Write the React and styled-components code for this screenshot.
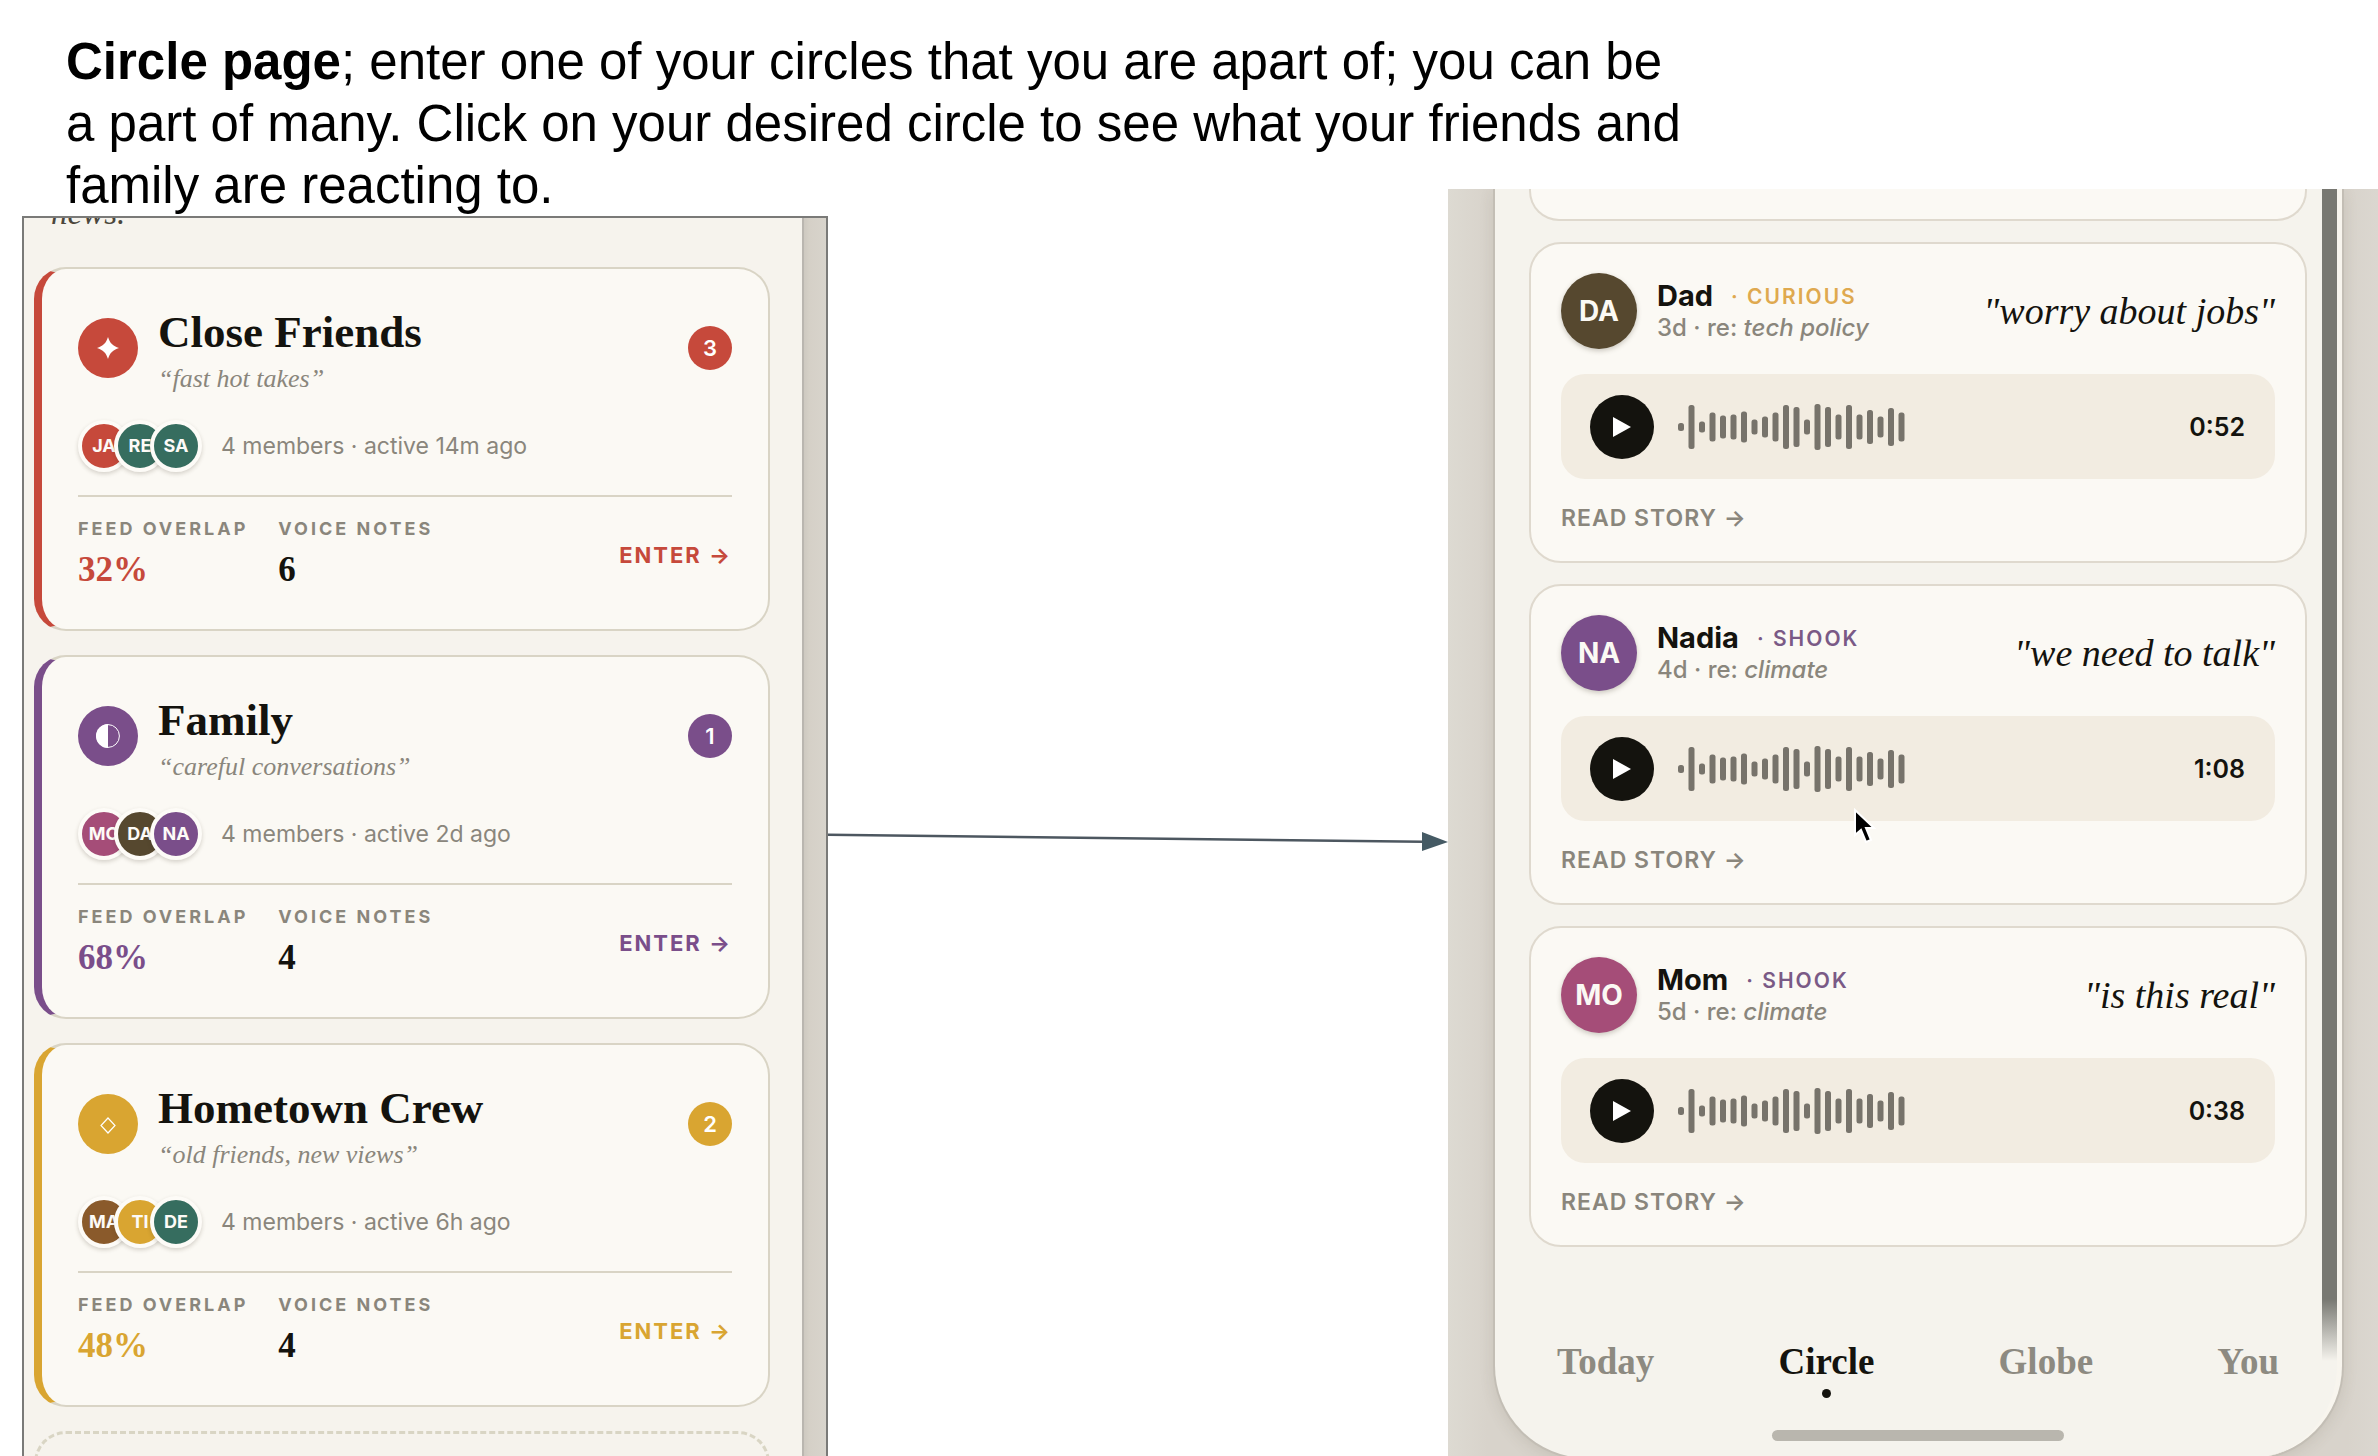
import React from 'react';
import styled, { createGlobalStyle } from 'styled-components';

const serif = `'Liberation Serif', 'Times New Roman', serif`;
const sans = `Inter, 'Liberation Sans', sans-serif`;

const GlobalStyle = createGlobalStyle`
    * {
        box-sizing: border-box;
    }
    body {
        margin: 0;
        background: #fff;
    }
    button {
        border: 0;
        padding: 0;
        background: none;
        cursor: pointer;
    }
    h1, h2, h3, p, dl, dt, dd {
        margin: 0;
    }
`

const Page = styled.div`
    height: 100vh;
    display: flex;
    flex-direction: column;
    overflow: hidden;
    font-family: ${sans};
    color: #14130e;
`
const Intro = styled.p`
    margin-bottom: -28px;
    padding: 31px 0 0 66px;
    font: 51px/62px 'Liberation Sans', Arial, sans-serif;
    color: #000;
`
const Board = styled.main`
    flex: 1;
    min-height: 0;
    padding-left: 22px;
    display: grid;
    grid-template-columns: 806fr 620fr 930fr;
    grid-template-rows: 100%;
`

// circles list
const ListShot = styled.section`
    margin-top: 27px;
    display: flex;
    overflow: hidden;
    border: 2px solid #7a7a78;
    border-bottom: 0;
    background: linear-gradient(90deg, #cbc6be, #d5d0c7 30%, #d8d4cc) right / 24px 100% no-repeat;
`
const ListScreen = styled.div`
    flex: 1;
    margin-right: 22px;
    padding: 0 32px 0 10px;
    background: #f6f3ed;
    border-right: 2px solid #bab6b0;
`
const Lead = styled.p`
    height: 59px;
    margin-top: -10px;
    padding-left: 17px;
    font: italic 33px/10px ${serif};
    color: #4b463c;
`
const Stack = styled.div`
    display: flex;
    flex-direction: column;
    gap: ${props => props.gap}px;
`
const CircleCard = styled.article`
    height: 364px;
    padding: 27px 36px 0;
    border: 2px solid #d9d4c5;
    border-left: 8px solid ${props => props.color};
    border-radius: 32px;
    background: #fbf9f4;
`
const EmptyCard = styled.div`
    height: 200px;
    border: 3px dashed #d9d5c4;
    border-radius: 32px;
`
const CardHead = styled.header`
    display: flex;
    align-items: center;
    gap: 20px;
`
const Symbol = styled.span`
    width: 60px;
    height: 60px;
    border-radius: 50%;
    display: grid;
    place-items: center;
    background: ${props => props.color};
`
const Titles = styled.div`
    flex: 1;
    padding-top: 10px;
`
const CircleName = styled.h2`
    font: bold 45px/52px ${serif};
`
const Tagline = styled.p`
    font: italic 26px/42px ${serif};
    color: #8a867c;
`
const Count = styled.span`
    width: 44px;
    height: 44px;
    border-radius: 50%;
    background: ${props => props.color};
    color: #fff;
    font-size: 22px;
    font-weight: 600;
    line-height: 44px;
    text-align: center;
`
const Members = styled.div`
    height: 52px;
    margin-top: 20px;
    display: flex;
    align-items: center;
    color: #8a867c;
    font-size: 23px;
`
const Face = styled.span`
    width: 52px;
    height: 52px;
    margin-right: -16px;
    border: 4px solid #fdfbf7;
    border-radius: 50%;
    background: ${props => props.color};
    box-shadow: 0 2px 4px rgba(60, 50, 30, 0.2);
    color: #fdfbf7;
    font-size: 18px;
    font-weight: 700;
    line-height: 44px;
    text-align: center;
    white-space: nowrap;
`
const MemberText = styled.span`
    margin-left: 35px;
`
const CardFoot = styled.footer`
    margin-top: 23px;
    padding-top: 20px;
    border-top: 2px solid #d9d4c5;
    display: flex;
    align-items: center;
`
const Stats = styled.dl`
    flex: 1;
    display: flex;
    gap: 30px;
`
const StatLabel = styled.dt`
    font-size: 18px;
    font-weight: 700;
    line-height: 24px;
    letter-spacing: 3px;
    color: #8a867c;
`
const StatValue = styled.dd`
    font: bold 35px/44px ${serif};
    margin-top: 7px;
    color: ${props => props.color};
`
const Enter = styled.button`
    font: 700 22px/28px ${sans};
    letter-spacing: 2px;
    color: ${props => props.color};
`

// connector between the two screens
const Connector = styled.svg`
    width: 100%;
    height: 1267px;
    display: block;
`

// circle feed
const FeedShot = styled.section`
    padding: 0 36px 0 47px;
    overflow: hidden;
    background: linear-gradient(90deg, #dddad2, #d8d3cb 40px, #d8d3cb calc(100% - 30px), #dbd7d0);
`
const Phone = styled.div`
    height: 1269px;
    display: flex;
    border-right: 5px solid #f8f5ee;
    border-radius: 0 0 92px 92px;
    background: #f5f3ed;
    box-shadow: 0 0 0 2px #c3beb5, 0 4px 16px rgba(90, 80, 60, 0.15);
`
const PhoneBody = styled.div`
    flex: 1;
    padding: 0 15px 0 34px;
`
const ScrollThumb = styled.div`
    width: 15px;
    height: 1172px;
    background: linear-gradient(#787872 1110px, #f5f3ed);
`
const NoteCard = styled.article`
    height: ${props => props.cut ? 32 : 321}px;
    padding: 29px 30px 0 30px;
    border: 2px solid #dfd9ce;
    border-top-width: ${props => props.cut ? 0 : 2}px;
    border-radius: ${props => props.cut ? '0 0 30px 30px' : '32px'};
    background: #fbf9f4;
`
const NoteHead = styled.header`
    display: flex;
    align-items: center;
    gap: 20px;
`
const BigFace = styled.span`
    width: 76px;
    height: 76px;
    border-radius: 50%;
    background: ${props => props.color};
    box-shadow: 0 2px 5px rgba(60, 50, 30, 0.25);
    color: #fbf9f4;
    font-size: 28px;
    font-weight: 700;
    line-height: 76px;
    text-align: center;
`
const Person = styled.div`
    flex: 1;
`
const NameRow = styled.div`
    display: flex;
    align-items: center;
    gap: 18px;
`
const Name = styled.h3`
    font-size: 29px;
    font-weight: 700;
    line-height: 34px;
`
const Mood = styled.span`
    font-size: 21px;
    font-weight: 600;
    letter-spacing: 2px;
    color: ${props => props.color};
`
const Topic = styled.p`
    font-size: 24px;
    font-weight: 500;
    line-height: 30px;
    color: #8a867c;
`
const Quote = styled.p`
    font: italic 38px/46px ${serif};
`
const Player = styled.div`
    height: 105px;
    margin-top: 25px;
    padding: 0 30px 0 29px;
    display: flex;
    align-items: center;
    gap: 24px;
    border-radius: 24px;
    background: #f2ece1;
`
const Play = styled.button`
    width: 64px;
    height: 64px;
    border-radius: 50%;
    background: #14130e;
    display: grid;
    place-items: center;
`
const Time = styled.time`
    margin-left: auto;
    font-size: 25px;
    font-weight: 600;
`
const ReadStory = styled.a`
    display: block;
    margin-top: 24px;
    font-size: 23px;
    font-weight: 600;
    line-height: 30px;
    letter-spacing: 1px;
    color: #8a867c;
    text-decoration: none;
`
const Tabs = styled.nav`
    margin-top: 93px;
    padding: 0 28px;
    display: flex;
    justify-content: space-between;
`
const Tab = styled.a`
    display: flex;
    flex-direction: column;
    align-items: center;
    gap: 5px;
    font: bold 37px/44px ${serif};
    color: ${props => props.$active ? '#14130e' : '#8d8a81'};
    text-decoration: none;
    &::after {
        content: '';
        width: 9px;
        height: 9px;
        border-radius: 50%;
        background: ${props => props.$active ? '#14130e' : 'transparent'};
    }
`
const HomeBar = styled.div`
    width: 292px;
    height: 11px;
    margin: 32px auto 0;
    border-radius: 6px;
    background: #b9b6ae;
`
const Pointer = styled.svg`
    position: absolute;
    left: 292px;
    top: 92px;
`
const PlayerWrap = styled.div`
    position: relative;
`

const star = <svg width="24" height="24" viewBox="0 0 24 24"><path d="M12 1c1.800 6 5 9.200 11 11-6 1.800-9.200 5-11 11-1.800-6-5-9.200-11-11 6-1.800 9.200-5 11-11z" fill="#fff" /></svg>
const half = <svg width="24" height="24" viewBox="0 0 24 24"><circle cx="12" cy="12" r="11.400" fill="none" stroke="#fff" /><path d="M12 0a12 12 0 0 0 0 24z" fill="#fff" /></svg>
const diamond = <svg width="18" height="20" viewBox="0 0 18 20"><path d="M9 4l7 7.500-7 7.500-7-7.500z" fill="none" stroke="#fff" strokeWidth="1.200" /></svg>

const circles = [
    {
        name: 'Close Friends', tagline: 'fast hot takes', color: '#c6493b', icon: star, count: 3,
        faces: [['JA', '#c6493b'], ['RE', '#366d5f'], ['SA', '#366d5f']],
        active: '14m', overlap: 32, notes: 6,
    },
    {
        name: 'Family', tagline: 'careful conversations', color: '#7a4e8a', icon: half, count: 1,
        faces: [['MO', '#a54d78'], ['DA', '#56482f'], ['NA', '#7a4e8a']],
        active: '2d', overlap: 68, notes: 4,
    },
    {
        name: 'Hometown Crew', tagline: 'old friends, new views', color: '#d9a531', icon: diamond, count: 2,
        faces: [['MA', '#8a5a2b'], ['TI', '#d9a531'], ['DE', '#366d5f']],
        active: '6h', overlap: 48, notes: 4,
    },
]

const notes = [
    { name: 'Dad', initials: 'DA', color: '#56482f', mood: 'CURIOUS', moodColor: '#dfa94f', age: '3d', topic: 'tech policy', quote: 'worry about jobs', time: '0:52' },
    { name: 'Nadia', initials: 'NA', color: '#7a4e8a', mood: 'SHOOK', moodColor: '#7a5a86', age: '4d', topic: 'climate', quote: 'we need to talk', time: '1:08', pointer: true },
    { name: 'Mom', initials: 'MO', color: '#a54d78', mood: 'SHOOK', moodColor: '#7a5a86', age: '5d', topic: 'climate', quote: 'is this real', time: '0:38' },
]

const bars = [8, 44, 11, 29, 23, 25, 31, 15, 21, 29, 44, 40, 15, 46, 40, 25, 44, 25, 34, 21, 38, 29]

const Wave = () => (
    <svg width="232" height="48" viewBox="0 0 232 48" aria-hidden="true">
        {bars.map((h, i) => (
            <rect key={i} x={i * 10.5} y={24 - h / 2} width="6" height={h} rx="2.500" fill="#77736b" />
        ))}
    </svg>
)

const Circle = ({ circle }) => (
    <CircleCard color={circle.color}>
        <CardHead>
            <Symbol color={circle.color}>{circle.icon}</Symbol>
            <Titles>
                <CircleName>{circle.name}</CircleName>
                <Tagline>“{circle.tagline}”</Tagline>
            </Titles>
            <Count color={circle.color}>{circle.count}</Count>
        </CardHead>
        <Members>
            {circle.faces.map(([initials, color]) => <Face key={initials} color={color}>{initials}</Face>)}
            <MemberText>4 members · active {circle.active} ago</MemberText>
        </Members>
        <CardFoot>
            <Stats>
                <div>
                    <StatLabel>FEED OVERLAP</StatLabel>
                    <StatValue color={circle.color}>{circle.overlap}%</StatValue>
                </div>
                <div>
                    <StatLabel>VOICE NOTES</StatLabel>
                    <StatValue>{circle.notes}</StatValue>
                </div>
            </Stats>
            <Enter color={circle.color}>ENTER →</Enter>
        </CardFoot>
    </CircleCard>
)

const Note = ({ note }) => (
    <NoteCard>
        <NoteHead>
            <BigFace color={note.color}>{note.initials}</BigFace>
            <Person>
                <NameRow>
                    <Name>{note.name}</Name>
                    <Mood color={note.moodColor}>· {note.mood}</Mood>
                </NameRow>
                <Topic>{note.age} · re: <em>{note.topic}</em></Topic>
            </Person>
            <Quote>"{note.quote}"</Quote>
        </NoteHead>
        <PlayerWrap>
            <Player>
                <Play aria-label={`Play ${note.name}`}>
                    <svg width="18" height="20" viewBox="0 0 18 20"><path d="M0 0l18 10-18 10z" fill="#fff" /></svg>
                </Play>
                <Wave />
                <Time>{note.time}</Time>
            </Player>
            {note.pointer && (
                <Pointer width="24" height="38" viewBox="0 0 24 38">
                    <path d="M2 2v25l6-5 5 12 5-2-5-12h8z" fill="#000" stroke="#fff" strokeWidth="2" />
                </Pointer>
            )}
        </PlayerWrap>
        <ReadStory href="#story">READ STORY →</ReadStory>
    </NoteCard>
)

export default function App() {
    return (
        <Page>
            <GlobalStyle />
            <Intro>
                <b>Circle page</b>; enter one of your circles that you are apart of; you can be<br />
                a part of many. Click on your desired circle to see what your friends and<br />
                family are reacting to.
            </Intro>
            <Board>
                <ListShot>
                    <ListScreen>
                        <Lead>news.</Lead>
                        <Stack gap={24}>
                            {circles.map(circle => <Circle key={circle.name} circle={circle} />)}
                            <EmptyCard />
                        </Stack>
                    </ListScreen>
                </ListShot>
                <Connector viewBox="0 0 620 1267" preserveAspectRatio="none" aria-hidden="true">
                    <path d="M0 645.700L595 652.700" stroke="#4d5760" strokeWidth="2.500" />
                    <path d="M594 643v19l26-9z" fill="#455a64" />
                </Connector>
                <FeedShot>
                    <Phone>
                        <PhoneBody>
                            <Stack gap={21}>
                                <NoteCard cut />
                                {notes.map(note => <Note key={note.name} note={note} />)}
                            </Stack>
                            <Tabs>
                                <Tab href="#today">Today</Tab>
                                <Tab href="#circle" $active>Circle</Tab>
                                <Tab href="#globe">Globe</Tab>
                                <Tab href="#you">You</Tab>
                            </Tabs>
                            <HomeBar />
                        </PhoneBody>
                        <ScrollThumb />
                    </Phone>
                </FeedShot>
            </Board>
        </Page>
    )
}
